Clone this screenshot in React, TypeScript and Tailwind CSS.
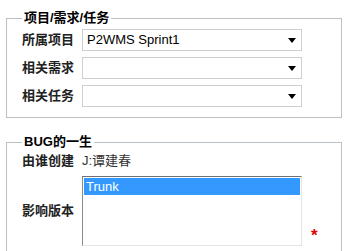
import React from "react";

const font = { fontFamily: '"Liberation Sans", Arial, "Noto Sans CJK SC", sans-serif' };

function Arrow() {
  return (
    <svg width="8" height="5" viewBox="0 0 8 5" className="mr-[5px]">
      <path d="M0 0 H8 L4 5 Z" fill="#000" />
    </svg>
  );
}

function Select({ value }: { value?: string }) {
  return (
    <div className="flex h-[22px] w-[220px] items-center justify-between border border-[#cfcfcf] bg-white">
      <span className="pl-[4px] text-[13px] leading-[20px] text-black">{value}</span>
      <Arrow />
    </div>
  );
}

function Row({ label, children }: { label: string; children?: React.ReactNode }) {
  return (
    <div className="flex h-[22px] items-center">
      <span className="w-[60px] text-[13px] font-bold leading-[22px] text-[#222]">{label}</span>
      {children}
    </div>
  );
}

export default function App() {
  return (
    <div className="min-h-[251px] bg-white pt-[10px]" style={font}>
      <fieldset className="ml-[6px] w-[336px] border border-[#b9c0c6] pb-[10px] pl-[15px] pt-[3px]">
        <legend className="px-[2px] text-[13px] font-bold leading-4 text-black">项目/需求/任务</legend>
        <div className="flex flex-col gap-[6px]">
          <Row label="所属项目">
            <Select value="P2WMS Sprint1" />
          </Row>
          <Row label="相关需求">
            <Select />
          </Row>
          <Row label="相关任务">
            <Select />
          </Row>
        </div>
      </fieldset>

      <fieldset className="ml-[6px] mt-[16px] w-[336px] border border-[#b9c0c6] pb-[10px] pl-[15px] pt-[1px]">
        <legend className="px-[2px] text-[13px] font-bold leading-4 text-black">BUG的一生</legend>
        <div className="flex h-[20px] items-center">
          <span className="w-[60px] text-[13px] font-bold text-[#222]">由谁创建</span>
          <span className="text-[13px] text-[#333]">J:谭建春</span>
        </div>
        <div className="mt-[5px] flex items-center">
          <span className="w-[60px] text-[13px] font-bold text-[#222]">影响版本</span>
          <div className="h-[70px] w-[220px] border border-t-[#707070] border-l-[#8a8a8a] border-r-[#e4e4e4] border-b-[#e4e4e4] bg-white p-[1px]">
            <div className="h-[17px] bg-[#3399ff] pl-[2px] text-[13px] leading-[17px] text-white">Trunk</div>
          </div>
          <span className="ml-[9px] mt-[48px] text-[17px] font-bold leading-none text-[#e00000]">*</span>
        </div>
      </fieldset>
    </div>
  );
}
